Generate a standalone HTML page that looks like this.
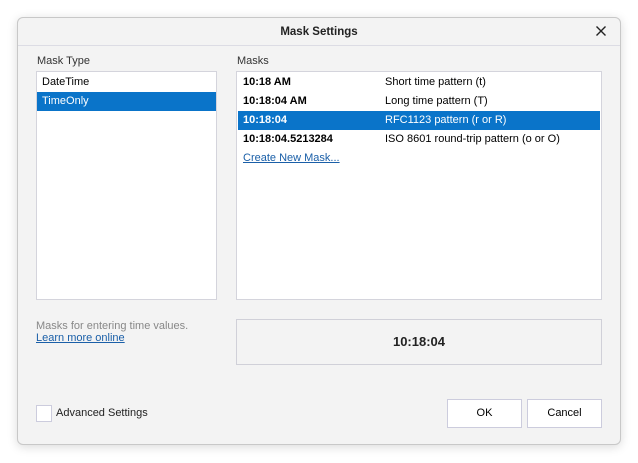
<!DOCTYPE html><html><head><style>
*{box-sizing:border-box;margin:0;padding:0}
body{width:638px;height:463px;background:#fff;font-family:"Liberation Sans",sans-serif;font-size:11px;color:#000;position:relative;overflow:hidden}
.dlg{position:absolute;left:17px;top:17px;width:604px;height:428px;background:#f3f3f3;border:1px solid #c8c8c8;border-radius:6px;box-shadow:0 2px 10px rgba(0,0,0,.15)}
.title{position:absolute;left:0;top:0;width:100%;height:28px;border-bottom:1px solid #dcdce4;text-align:center;line-height:28px;font-weight:bold;font-size:11.5px;color:#222}
.x{position:absolute;right:12px;top:6px;width:14px;height:14px}
.a{position:absolute}
.lbl{color:#333}
.list{background:#fff;border:1px solid #d4d4dc}
.row{height:19px;line-height:19px;padding-left:5px;position:relative}
.sel{background:#0a74c9;color:#fff}
.row b{position:absolute;left:5px}
.row span{position:absolute;left:147px}
a{color:#1a5fa8;text-decoration:underline}
.btn{background:#fff;border:1px solid #ccd;text-align:center;line-height:26px}
</style></head><body>
<div class="dlg">
<div class="title">Mask Settings</div>
<svg class="x" viewBox="0 0 14 14"><path d="M2.5 2.5L11.5 11.5M11.5 2.5L2.5 11.5" stroke="#222" stroke-width="1.4"/></svg>
</div>
<div class="a lbl" style="left:37px;top:55px">Mask Type</div>
<div class="a lbl" style="left:237px;top:55px">Masks</div>
<div class="a list" style="left:36px;top:71px;width:181px;height:229px;padding-top:1px">
<div class="row">DateTime</div><div class="row sel">TimeOnly</div></div>
<div class="a list" style="left:236px;top:71px;width:366px;height:229px;padding:1px 1px 0">
<div class="row"><b>10:18 AM</b><span>Short time pattern (t)</span></div>
<div class="row"><b>10:18:04 AM</b><span>Long time pattern (T)</span></div>
<div class="row sel"><b>10:18:04</b><span>RFC1123 pattern (r or R)</span></div>
<div class="row"><b>10:18:04.5213284</b><span>ISO 8601 round-trip pattern (o or O)</span></div>
<div class="row"><a>Create New Mask...</a></div></div>
<div class="a" style="left:36px;top:320px;color:#888">Masks for entering time values.</div>
<div class="a" style="left:36px;top:332px"><a>Learn more online</a></div>
<div class="a" style="left:236px;top:319px;width:366px;height:46px;border:1px solid #d0d0d8;background:#f3f3f3;text-align:center;line-height:44px;font-weight:bold;font-size:13px;color:#222">10:18:04</div>
<div class="a" style="left:36px;top:405px;width:16px;height:17px;border:1px solid #ccd;background:#fff"></div>
<div class="a" style="left:56px;top:407px;color:#222">Advanced Settings</div>
<div class="a btn" style="left:447px;top:399px;width:75px;height:29px">OK</div>
<div class="a btn" style="left:527px;top:399px;width:75px;height:29px">Cancel</div>
</body></html>
